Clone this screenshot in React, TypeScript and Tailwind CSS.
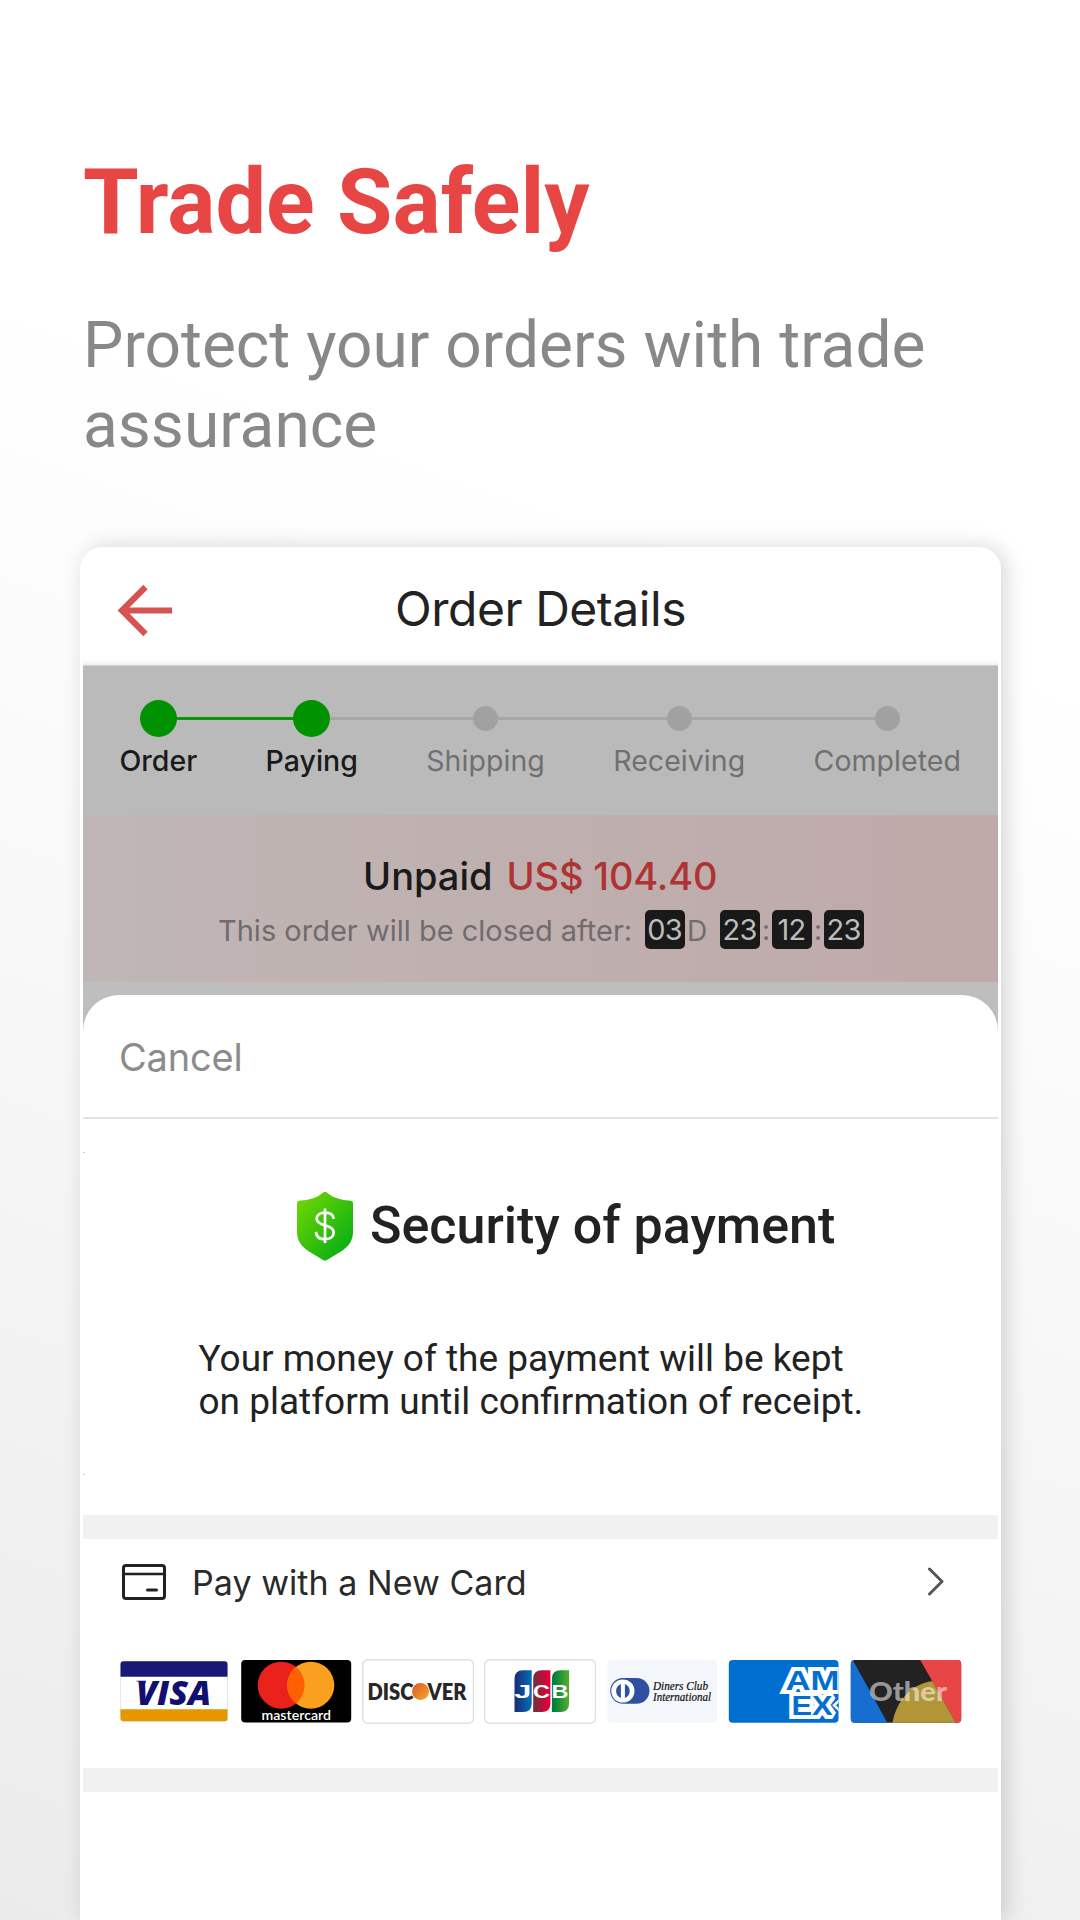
import type { ReactNode } from "react";

const steps = [
  { label: "Order", done: true },
  { label: "Paying", done: true },
  { label: "Shipping", done: false },
  { label: "Receiving", done: false },
  { label: "Completed", done: false },
];

function BackArrow() {
  return (
    <svg width="56" height="54" viewBox="0 0 56 54" fill="none" stroke="#d65352" strokeWidth="6.2">
      <path d="M5 27.500H56M29.500 4L6 27.500l23.500 23.500" />
    </svg>
  );
}

function Header() {
  return (
    <header className="relative flex h-[119px] shrink-0 items-center justify-center">
      <div className="absolute top-9 left-9">
        <BackArrow />
      </div>
      <h2 className="mt-[5px] text-[48px] leading-[60px] tracking-[-0.45px] text-[#222]">Order Details</h2>
      <div className="absolute inset-x-[3px] bottom-0 h-1.5 border-b border-[#d2d2d2] bg-linear-to-b from-white to-[#efefef]" />
    </header>
  );
}

function Progress() {
  return (
    <div className="h-[149px] bg-[#bababa] pt-[34px] pr-[37px] pl-[36.5px]">
      <div className="relative flex justify-between">
        <div className="absolute top-[17px] right-[75px] left-10 h-[3px] bg-[#a6a6a6]" />
        <div className="absolute top-[17px] left-10 h-[3px] w-[154px] bg-[#0a960a]" />
        {steps.map((s) => (
          <div key={s.label} className="relative flex flex-col items-center gap-1.5">
            <div className="flex h-[37px] items-center">
              <div className={s.done ? "size-[37px] rounded-full bg-[#009200]" : "size-[25px] rounded-full bg-[#a1a1a1]"} />
            </div>
            <span
              className={
                s.done
                  ? "text-[28.5px] leading-9 font-medium text-[#1a1a1a]"
                  : "text-[28.5px] leading-9 tracking-[0.05px] text-[#707070]"
              }
            >
              {s.label}
            </span>
          </div>
        ))}
      </div>
    </div>
  );
}

function Digits({ children }: { children: string }) {
  return (
    <span className="flex h-[39px] w-10 items-center justify-center rounded-[5px] bg-[#191919] pr-px tracking-[-0.8px] text-[#bdbdbd]">
      {children}
    </span>
  );
}

function Unpaid() {
  return (
    <div className="flex h-[167px] flex-col gap-[9px] bg-linear-to-r from-[#bfb6b5] to-[#bfa9a9] pt-[37px]">
      <div className="pl-[280px] text-[38px] leading-[49px] font-medium whitespace-nowrap text-[#1a1a1a]">
        Unpaid<span className="pl-[14px] tracking-[-0.15px] text-[#ae3333]">US$ 104.40</span>
      </div>
      <div className="flex h-[39px] items-center pl-[135px] text-[29px] whitespace-nowrap text-[#706c6d]">
        <span className="w-[427px] pt-0.5">This order will be closed after:</span>
        <Digits>03</Digits>
        <span className="w-[35px] pt-0.5 pl-0.5 text-[28px]">D</span>
        <Digits>23</Digits>
        <span className="w-3 text-center text-[28px]">:</span>
        <Digits>12</Digits>
        <span className="w-3 text-center text-[28px]">:</span>
        <Digits>23</Digits>
      </div>
    </div>
  );
}

function Shield() {
  return (
    <svg width="56" height="70" viewBox="0 0 56 70">
      <defs>
        <linearGradient id="shield" x1="0" y1="0" x2="0.9" y2="1">
          <stop offset="0" stopColor="#77d900" />
          <stop offset="1" stopColor="#00ab17" />
        </linearGradient>
      </defs>
      <path
        d="M26.5 1.2Q28 .2 29.500 1.200Q38 9 54 9.800Q56 10 56 12V41C56 50 51 56 44 60.500L29.500 69.300Q28 70.200 26.500 69.300L12 60.500C5 56 0 50 0 41V12Q0 10 2 9.800Q18 9 26.500 1.200Z"
        fill="url(#shield)"
      />
      <path
        d="M28 17.500V52M36.700 27.800C36.300 24 33 21.700 28 21.700C23 21.700 19.700 24 19.700 27.800C19.700 31.500 22.500 33 28 34.400C33.500 35.800 36.700 37.600 36.700 41.600C36.700 45.700 33.200 48.200 28 48.200C22.500 48.200 19.200 45.700 18.900 40.800"
        fill="none"
        stroke="#fff"
        strokeWidth="2.700"
      />
    </svg>
  );
}

function CardIcon() {
  return (
    <svg width="44" height="36" viewBox="0 0 44 36" fill="none" stroke="#222" strokeWidth="3" strokeLinecap="round">
      <rect x="1.500" y="1.500" width="41" height="33" rx="2.500" />
      <path d="M2 10H42" strokeWidth="2.500" />
      <path d="M25.500 26H34.500" />
    </svg>
  );
}

function Logo({ children }: { children: ReactNode }) {
  return (
    <svg width="112" height="66" viewBox="0 0 112 66" className="shrink-0">
      {children}
    </svg>
  );
}

function Visa() {
  return (
    <Logo>
      <rect x="2.500" y="3.300" width="107" height="60" rx="3" fill="#fff" stroke="#dfe8f0" />
      <path d="M2.500 18.700V6.300Q2.500 3.300 5.500 3.300H106.500Q109.500 3.300 109.500 6.300V18.700Z" fill="#1a1876" />
      <path d="M2.500 51.200V60.300Q2.500 63.300 5.500 63.300H106.500Q109.500 63.300 109.500 60.300V51.200Z" fill="#e59700" />
      <text x="18" y="47" textLength="75" lengthAdjust="spacingAndGlyphs" fontFamily="Open Sans" fontStyle="italic" fontWeight="800" fontSize="34" fill="#130f70">
        VISA
      </text>
      <path d="M18.500 22.700H28L27 26.500Q22.500 23.500 18.500 23.200Z" fill="#130f70" />
    </Logo>
  );
}

function Mastercard() {
  return (
    <Logo>
      <rect x="1.200" y="2" width="110" height="62.500" rx="4" fill="#000" />
      <circle cx="41.200" cy="27.200" r="23.500" fill="#eb221c" />
      <circle cx="70.800" cy="27.200" r="23.500" fill="#f9a01f" />
      <path d="M56 9A23.500 23.500 0 0 1 56 45.400A23.500 23.500 0 0 1 56 9Z" fill="#ff5f00" />
      <text x="21.500" y="61.500" textLength="69.500" lengthAdjust="spacingAndGlyphs" fontFamily="Lato" fontWeight="600" fontSize="13" fill="#fff">
        mastercard
      </text>
    </Logo>
  );
}

function Discover() {
  return (
    <Logo>
      <defs>
        <linearGradient id="disc" x1="0" y1="0" x2="1" y2="1">
          <stop offset="0.200" stopColor="#e0672a" />
          <stop offset="1" stopColor="#f9a727" />
        </linearGradient>
      </defs>
      <rect x="0.700" y="1.700" width="110.800" height="63.500" rx="5" fill="#fff" stroke="#dcdfe6" strokeWidth="1.400" />
      <text x="5.500" y="41.500" textLength="46" lengthAdjust="spacingAndGlyphs" fontFamily="Lato" fontWeight="800" fontSize="22" fill="#2a2627">
        DISC
      </text>
      <circle cx="58.500" cy="33.400" r="8.500" fill="url(#disc)" />
      <text x="65.500" y="41.500" textLength="39" lengthAdjust="spacingAndGlyphs" fontFamily="Lato" fontWeight="800" fontSize="22" fill="#2a2627">
        VER
      </text>
    </Logo>
  );
}

function Jcb() {
  const bars = [
    { x: 30.5, letter: "J", from: "#1b2f79", to: "#0069b5" },
    { x: 49.2, letter: "C", from: "#7b2a3c", to: "#e4003a" },
    { x: 67.9, letter: "B", from: "#007e3c", to: "#4bab2e" },
  ];
  return (
    <Logo>
      <rect x="0.700" y="1.700" width="110.800" height="63.500" rx="5" fill="#fff" stroke="#dcdfe6" strokeWidth="1.400" />
      {bars.map((b) => (
        <g key={b.x} transform={`translate(${b.x} 12.300)`}>
          <linearGradient id={`jcb${b.x}`}>
            <stop offset="0.100" stopColor={b.from} />
            <stop offset="0.900" stopColor={b.to} />
          </linearGradient>
          <path d="M0 8.500Q0 0 8.500 0H17.200V33.200Q17.200 41.700 8.700 41.700H0Z" fill={`url(#jcb${b.x})`} />
          <text x="-0.300" y="28" textLength="17" lengthAdjust="spacingAndGlyphs" fontFamily="Liberation Sans" fontWeight="700" fontSize="18.500" fill="#fff">
            {b.letter}
          </text>
        </g>
      ))}
    </Logo>
  );
}

function Diners() {
  return (
    <Logo>
      <rect x="1.500" y="2" width="109.500" height="62.700" rx="4" fill="#f3f7fb" />
      <rect x="4.200" y="20" width="39.300" height="25.700" rx="12.850" fill="#2f4fa2" />
      <circle cx="16.900" cy="33" r="11.600" fill="#fff" />
      <path d="M14.900 26A7.500 7.500 0 0 0 14.900 40ZM18.900 26A7.500 7.500 0 0 1 18.900 40Z" fill="#2f4fa2" />
      <text x="47" y="32.400" textLength="55" lengthAdjust="spacingAndGlyphs" fontFamily="Liberation Serif" fontStyle="italic" fontSize="11.500" fill="#111" stroke="#111" strokeWidth="0.200">
        Diners Club
      </text>
      <text x="47" y="43.300" textLength="58" lengthAdjust="spacingAndGlyphs" fontFamily="Liberation Serif" fontStyle="italic" fontSize="11.500" fill="#111" stroke="#111" strokeWidth="0.200">
        International
      </text>
    </Logo>
  );
}

function Amex() {
  return (
    <Logo>
      <clipPath id="amex">
        <rect x="0.800" y="2" width="109.700" height="62.700" rx="4" />
      </clipPath>
      <g clipPath="url(#amex)">
        <rect width="112" height="66" fill="#006fd1" />
        <g fontFamily="Liberation Sans" fontWeight="700" fontSize="28.500" fill="#006fd1" stroke="#fff" strokeWidth="8" strokeMiterlimit="2" paintOrder="stroke">
          <text x="57.500" y="32.300" textLength="54" lengthAdjust="spacingAndGlyphs">AM</text>
          <text x="63.500" y="57.300" textLength="41" lengthAdjust="spacingAndGlyphs">EX</text>
        </g>
        <path d="M113 41L106 47.200L113 54" fill="#006fd1" stroke="#fff" strokeWidth="2.500" />
      </g>
    </Logo>
  );
}

function Other() {
  return (
    <Logo>
      <clipPath id="other">
        <rect x="0.800" y="2" width="110.400" height="62.700" rx="4" />
      </clipPath>
      <g clipPath="url(#other)">
        <rect width="112" height="66" fill="#222" />
        <path d="M0 -3L38 66H0Z" fill="#166fd0" />
        <path d="M69.100 0L106.500 66H112V0Z" fill="#e84547" />
        <path d="M42.300 66C46 42 62 26 82.200 23L106.500 66Z" fill="#b29537" />
      </g>
      <text x="19" y="43.300" textLength="78" lengthAdjust="spacingAndGlyphs" fontFamily="Lato" fontWeight="900" fontSize="27" fill="#fff" fillOpacity="0.550">
        Other
      </text>
    </Logo>
  );
}

function Sheet() {
  return (
    <div className="bg-[#bebebe] pt-[13px]">
      <div className="rounded-t-[36px] bg-white">
        <div className="h-[124px] border-b-2 border-[#e2e2e2] pt-[39px] pl-9">
          <div className="text-[38px] leading-[46px] tracking-[-0.2px] text-[#8c8c8c]">Cancel</div>
        </div>
        <section className="relative h-[396px] font-[Roboto] text-[#222]">
          <div className="absolute top-[33px] left-0 h-px w-0.5 bg-[#ccc]" />
          <div className="absolute top-[355px] left-0 h-px w-0.5 bg-[#ccc]" />
          <div className="flex items-center gap-[17px] pt-[71px] pl-[214px]">
            <Shield />
            <h3 className="text-[52px] leading-[71px] font-medium whitespace-nowrap">Security of payment</h3>
          </div>
          <p className="pt-[75.500px] pl-[115.5px] text-[37px] leading-[43px] whitespace-nowrap">
            Your money of the payment will be kept
            <br />
            on platform until confirmation of receipt.
          </p>
        </section>
        <div className="h-6 bg-[#f1f1f1]" />
        <section className="h-[229px] pr-9 pl-[35px]">
          <div className="flex h-[86px] items-center pr-[18.500px] pl-1">
            <CardIcon />
            <span className="grow pt-px pl-[26px] text-[34px] leading-10 tracking-[0.05px] text-[#2a2a2a]">Pay with a New Card</span>
            <svg width="17" height="30" viewBox="0 0 17 30" fill="none" stroke="#555" strokeWidth="3" strokeLinecap="round" strokeLinejoin="round">
              <path d="M2.500 2L15 14.500L2.500 27" />
            </svg>
          </div>
          <div className="flex gap-2.5 pt-[33px]">
            <Visa />
            <Mastercard />
            <Discover />
            <Jcb />
            <Diners />
            <Amex />
            <Other />
          </div>
        </section>
        <div className="h-6 bg-[#f1f1f1]" />
      </div>
    </div>
  );
}

export default function App() {
  return (
    <main className="flex h-[1920px] w-[1080px] flex-col overflow-hidden bg-[linear-gradient(200deg,#fff_0%,#fff_30%,#f6f6f6_64%,#ebebeb_100%)] font-[Inter,sans-serif]">
      <div className="pt-[150px] pl-[83px] font-[Roboto]">
        <h1 className="text-[90px] leading-[106px] font-bold text-[#e84545]">Trade Safely</h1>
        <p className="mt-[50px] w-[900px] text-[64px] leading-[80px] text-[#888]">Protect your orders with trade assurance</p>
      </div>
      <div className="mt-[81px] ml-20 flex w-[921px] grow flex-col rounded-t-[22px] bg-white shadow-[5px_0_22px_rgba(0,0,0,0.16)]">
        <Header />
        <div className="mx-[3px]">
          <Progress />
          <Unpaid />
          <Sheet />
        </div>
      </div>
    </main>
  );
}
